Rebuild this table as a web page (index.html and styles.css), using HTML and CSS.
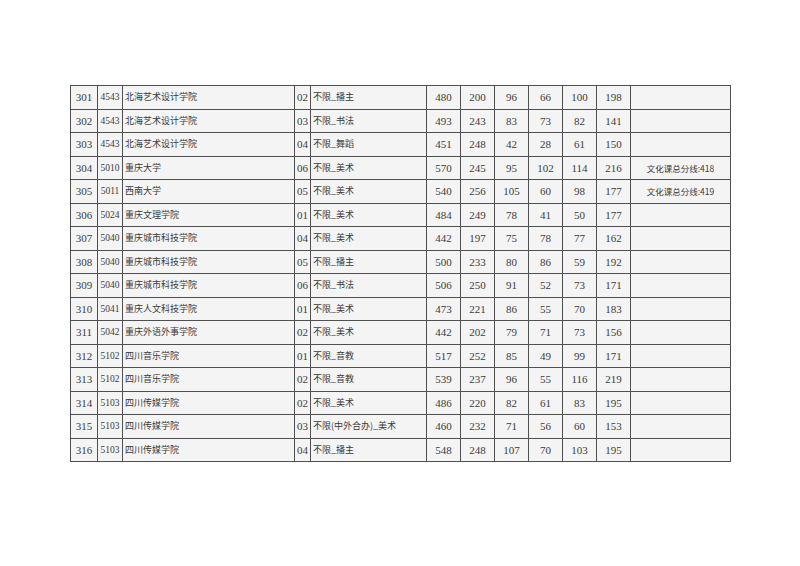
FILE: index.html
```html
<!DOCTYPE html>
<html lang="zh">
<head>
<meta charset="utf-8">
<link rel="stylesheet" href="styles.css">
</head>
<body>
<div class="page">
<table class="grid">
<colgroup>
<col class="c1"><col class="c2"><col class="c3"><col class="c4"><col class="c5">
<col class="cn"><col class="cn"><col class="cn"><col class="cn"><col class="cn"><col class="cn">
<col class="c12">
</colgroup>
<tbody>
<tr><td class="no">301</td><td class="code">4543</td><td class="zh">北海艺术设计学院</td><td class="mc">02</td><td class="zh">不限_播主</td><td class="n">480</td><td class="n">200</td><td class="n">96</td><td class="n">66</td><td class="n">100</td><td class="n">198</td><td class="note"></td></tr>
<tr><td class="no">302</td><td class="code">4543</td><td class="zh">北海艺术设计学院</td><td class="mc">03</td><td class="zh">不限_书法</td><td class="n">493</td><td class="n">243</td><td class="n">83</td><td class="n">73</td><td class="n">82</td><td class="n">141</td><td class="note"></td></tr>
<tr><td class="no">303</td><td class="code">4543</td><td class="zh">北海艺术设计学院</td><td class="mc">04</td><td class="zh">不限_舞蹈</td><td class="n">451</td><td class="n">248</td><td class="n">42</td><td class="n">28</td><td class="n">61</td><td class="n">150</td><td class="note"></td></tr>
<tr><td class="no">304</td><td class="code">5010</td><td class="zh">重庆大学</td><td class="mc">06</td><td class="zh">不限_美术</td><td class="n">570</td><td class="n">245</td><td class="n">95</td><td class="n">102</td><td class="n">114</td><td class="n">216</td><td class="note">文化课总分线:418</td></tr>
<tr><td class="no">305</td><td class="code">5011</td><td class="zh">西南大学</td><td class="mc">05</td><td class="zh">不限_美术</td><td class="n">540</td><td class="n">256</td><td class="n">105</td><td class="n">60</td><td class="n">98</td><td class="n">177</td><td class="note">文化课总分线:419</td></tr>
<tr><td class="no">306</td><td class="code">5024</td><td class="zh">重庆文理学院</td><td class="mc">01</td><td class="zh">不限_美术</td><td class="n">484</td><td class="n">249</td><td class="n">78</td><td class="n">41</td><td class="n">50</td><td class="n">177</td><td class="note"></td></tr>
<tr><td class="no">307</td><td class="code">5040</td><td class="zh">重庆城市科技学院</td><td class="mc">04</td><td class="zh">不限_美术</td><td class="n">442</td><td class="n">197</td><td class="n">75</td><td class="n">78</td><td class="n">77</td><td class="n">162</td><td class="note"></td></tr>
<tr><td class="no">308</td><td class="code">5040</td><td class="zh">重庆城市科技学院</td><td class="mc">05</td><td class="zh">不限_播主</td><td class="n">500</td><td class="n">233</td><td class="n">80</td><td class="n">86</td><td class="n">59</td><td class="n">192</td><td class="note"></td></tr>
<tr><td class="no">309</td><td class="code">5040</td><td class="zh">重庆城市科技学院</td><td class="mc">06</td><td class="zh">不限_书法</td><td class="n">506</td><td class="n">250</td><td class="n">91</td><td class="n">52</td><td class="n">73</td><td class="n">171</td><td class="note"></td></tr>
<tr><td class="no">310</td><td class="code">5041</td><td class="zh">重庆人文科技学院</td><td class="mc">01</td><td class="zh">不限_美术</td><td class="n">473</td><td class="n">221</td><td class="n">86</td><td class="n">55</td><td class="n">70</td><td class="n">183</td><td class="note"></td></tr>
<tr><td class="no">311</td><td class="code">5042</td><td class="zh">重庆外语外事学院</td><td class="mc">02</td><td class="zh">不限_美术</td><td class="n">442</td><td class="n">202</td><td class="n">79</td><td class="n">71</td><td class="n">73</td><td class="n">156</td><td class="note"></td></tr>
<tr><td class="no">312</td><td class="code">5102</td><td class="zh">四川音乐学院</td><td class="mc">01</td><td class="zh">不限_音教</td><td class="n">517</td><td class="n">252</td><td class="n">85</td><td class="n">49</td><td class="n">99</td><td class="n">171</td><td class="note"></td></tr>
<tr><td class="no">313</td><td class="code">5102</td><td class="zh">四川音乐学院</td><td class="mc">02</td><td class="zh">不限_音教</td><td class="n">539</td><td class="n">237</td><td class="n">96</td><td class="n">55</td><td class="n">116</td><td class="n">219</td><td class="note"></td></tr>
<tr><td class="no">314</td><td class="code">5103</td><td class="zh">四川传媒学院</td><td class="mc">02</td><td class="zh">不限_美术</td><td class="n">486</td><td class="n">220</td><td class="n">82</td><td class="n">61</td><td class="n">83</td><td class="n">195</td><td class="note"></td></tr>
<tr><td class="no">315</td><td class="code">5103</td><td class="zh">四川传媒学院</td><td class="mc">03</td><td class="zh">不限(中外合办)_美术</td><td class="n">460</td><td class="n">232</td><td class="n">71</td><td class="n">56</td><td class="n">60</td><td class="n">153</td><td class="note"></td></tr>
<tr><td class="no">316</td><td class="code">5103</td><td class="zh">四川传媒学院</td><td class="mc">04</td><td class="zh">不限_播主</td><td class="n">548</td><td class="n">248</td><td class="n">107</td><td class="n">70</td><td class="n">103</td><td class="n">195</td><td class="note"></td></tr>
</tbody>
</table>
</div>
</body>
</html>
```
FILE: styles.css
```css
html, body {
  margin: 0;
  padding: 0;
  background: #ffffff;
}
.page {
  width: 800px;
  height: 566px;
  padding: 85px 0 0 70px;
  box-sizing: border-box;
}
.grid {
  border-collapse: collapse;
  table-layout: fixed;
  width: 660px;
  font-family: "Liberation Serif", "Noto Sans CJK SC", serif;
  color: #3c3c3c;
  background: #f4f4f4;
}
.c1 { width: 27px; }
.c2 { width: 25px; }
.c3 { width: 172px; }
.c4 { width: 16px; }
.c5 { width: 116px; }
.cn { width: 34px; }
.c12 { width: 100px; }
.grid tr { height: 23.5px; }
.grid td {
  border: 1px solid #505050;
  padding: 0;
  white-space: nowrap;
  overflow: hidden;
  line-height: 14px;
  vertical-align: middle;
}
.no {
  font-size: 11px;
  text-align: center;
}
.code {
  font-size: 9.5px;
  text-align: center;
}
.zh {
  font-family: "Noto Sans CJK SC", sans-serif;
  font-size: 9px;
  padding-left: 2px !important;
  text-align: left;
  color: #3a3a3a;
}
.mc {
  font-size: 11px;
  text-align: center;
}
.n {
  font-size: 11px;
  text-align: center;
}
.note {
  font-family: "Noto Sans CJK SC", sans-serif;
  font-size: 8.5px;
  text-align: center;
  color: #3a3a3a;
}
```
